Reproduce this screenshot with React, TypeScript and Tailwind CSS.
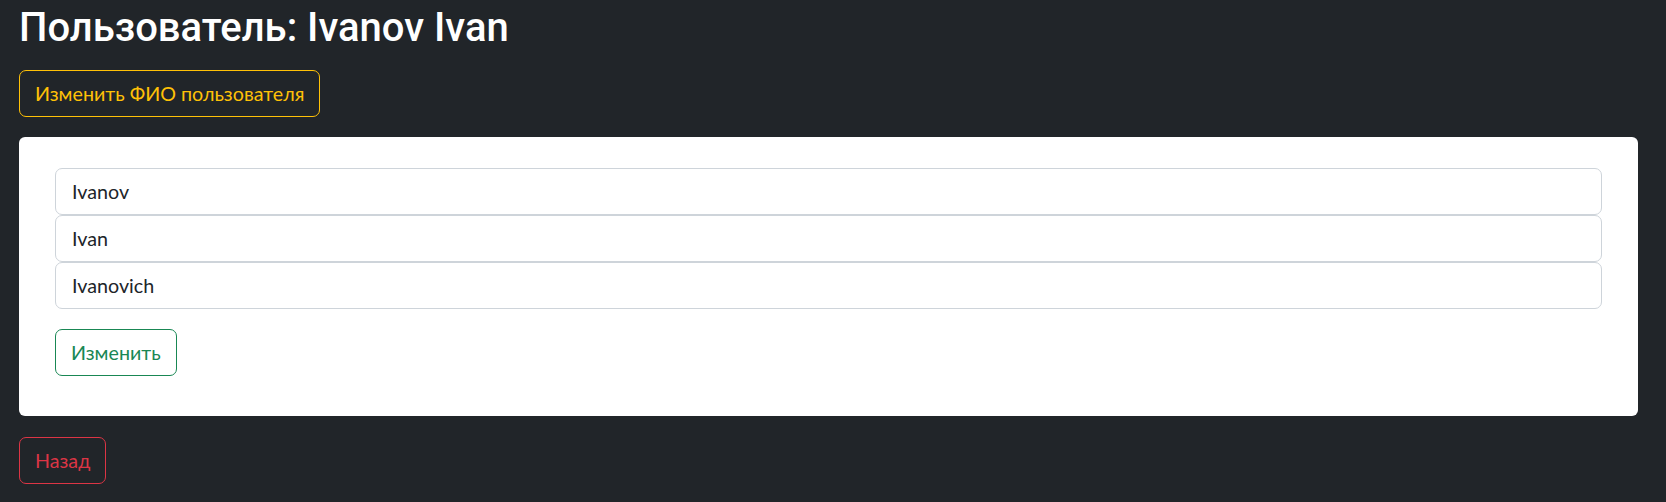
import React, { useState } from 'react';

export default function App() {
  const [lastName, setLastName] = useState('Ivanov');
  const [firstName, setFirstName] = useState('Ivan');
  const [middleName, setMiddleName] = useState('Ivanovich');

  return (
    <div className="min-h-screen bg-[#212529] pl-[19px] pr-[28px] pb-[19px] pt-[4px] font-['Lato',sans-serif] text-white">
      <h2 className="h-[48px] font-['Roboto',sans-serif] text-[40px] leading-[48px] font-medium">Пользователь: Ivanov Ivan</h2>

      <button className="mt-[18px] flex h-[47px] items-center rounded-[7px] border border-[#ffc107] px-[15px] text-[19.7px] text-[#ffc107]">
        Изменить ФИО пользователя
      </button>

      {/* Edit form */}
      <div className="mt-[20px] rounded-[6px] bg-white px-[36px] pt-[31px] pb-[40px]">
        <div className="flex flex-col">
          <input
            value={lastName}
            onChange={(e) => setLastName(e.target.value)}
            className="h-[47px] w-full rounded-[7px] border border-[#ced4da] px-[16px] text-[19.7px] text-[#212529] outline-none"
          />
          <input
            value={firstName}
            onChange={(e) => setFirstName(e.target.value)}
            className="h-[47px] w-full rounded-[7px] border border-[#ced4da] px-[16px] text-[19.7px] text-[#212529] outline-none"
          />
          <input
            value={middleName}
            onChange={(e) => setMiddleName(e.target.value)}
            className="h-[47px] w-full rounded-[7px] border border-[#ced4da] px-[16px] text-[19.7px] text-[#212529] outline-none"
          />
        </div>
        <button className="mt-[20px] flex h-[47px] items-center rounded-[7px] border border-[#198754] px-[15px] text-[19.7px] text-[#198754]">
          Изменить
        </button>
      </div>

      <button className="mt-[21px] flex h-[47px] items-center rounded-[7px] border border-[#dc3545] px-[15px] text-[19.7px] text-[#dc3545]">
        Назад
      </button>
    </div>
  );
}
